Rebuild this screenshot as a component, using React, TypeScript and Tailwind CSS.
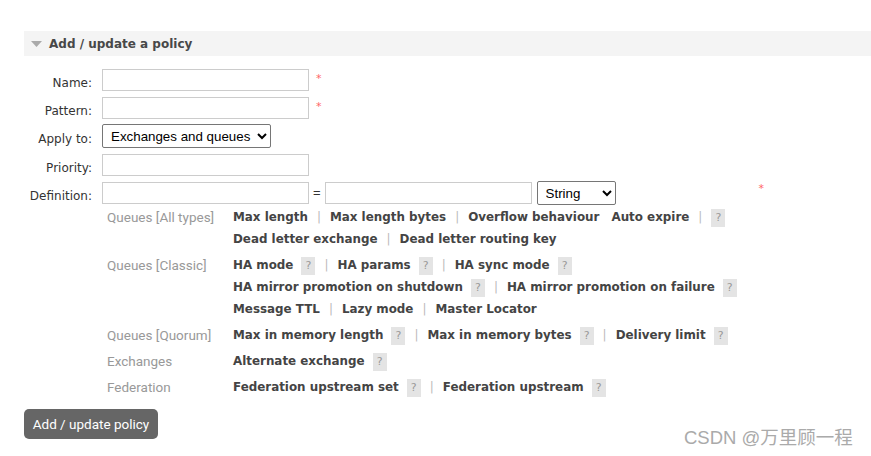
import React from 'react';

const verdana = { fontFamily: '"DejaVu Sans", Verdana, sans-serif' };
const arial = { fontFamily: '"Liberation Sans", Arial, sans-serif' };

type Item = { text: string; help?: boolean; sep?: boolean };

const groups: { label: string; lines: Item[][] }[] = [
  {
    label: 'Queues [All types]',
    lines: [
      [
        { text: 'Max length', sep: true },
        { text: 'Max length bytes', sep: true },
        { text: 'Overflow behaviour' },
        { text: 'Auto expire', sep: true },
      ],
      [{ text: 'Dead letter exchange', sep: true }, { text: 'Dead letter routing key' }],
    ],
  },
  {
    label: 'Queues [Classic]',
    lines: [
      [
        { text: 'HA mode', help: true, sep: true },
        { text: 'HA params', help: true, sep: true },
        { text: 'HA sync mode', help: true },
      ],
      [
        { text: 'HA mirror promotion on shutdown', help: true, sep: true },
        { text: 'HA mirror promotion on failure', help: true },
      ],
      [
        { text: 'Message TTL', sep: true },
        { text: 'Lazy mode', sep: true },
        { text: 'Master Locator' },
      ],
    ],
  },
  {
    label: 'Queues [Quorum]',
    lines: [
      [
        { text: 'Max in memory length', help: true, sep: true },
        { text: 'Max in memory bytes', help: true, sep: true },
        { text: 'Delivery limit', help: true },
      ],
    ],
  },
  { label: 'Exchanges', lines: [[{ text: 'Alternate exchange', help: true }]] },
  {
    label: 'Federation',
    lines: [
      [
        { text: 'Federation upstream set', help: true, sep: true },
        { text: 'Federation upstream', help: true },
      ],
    ],
  },
];

const Help = ({ tight }: { tight?: boolean }) => (
  <span
    className={`${tight ? '' : 'ml-[8px]'} inline-flex h-[18px] w-[14px] items-center justify-center bg-[#e4e4e4] text-[11px] font-normal text-[#999]`}
  >
    ?
  </span>
);

const Sep = () => <span className="mx-[9px] font-normal text-[#bbb]">|</span>;

const Req = () => <span className="ml-[7px] self-start pt-[2px] text-[11px] text-[#f66]">*</span>;

const TextInput = () => (
  <input type="text" className="h-[22px] w-[207px] border border-[#ccc] bg-white outline-none" />
);

const FormRow = ({ label, children, className }: { label: string; children: React.ReactNode; className?: string }) => (
  <div className={`flex items-center ${className ?? ''}`}>
    <label className="h-[22px] w-[68px] text-right text-[12px] leading-[28px] text-[#333]" style={verdana}>
      {label}
    </label>
    <div className="ml-[10px] flex items-center">{children}</div>
  </div>
);

export default function App() {
  return (
    <div className="relative h-[456px] w-[871px] overflow-hidden bg-white" style={verdana}>
      <div className="pl-[24px] pt-[31px]">
        <div className="flex h-[25px] items-center bg-[#f4f4f4] pl-[7px]">
          <svg width="11" height="7" viewBox="0 0 11 7" className="mt-[1px]">
            <polygon points="0,0 11,0 5.5,6" fill="#aaa" />
          </svg>
          <span className="ml-[7px] text-[12px] font-bold text-[#484848]">Add / update a policy</span>
        </div>

        <div className="mt-[13px] flex flex-col">
          <FormRow label="Name:">
            <TextInput />
            <Req />
          </FormRow>
          <FormRow label="Pattern:" className="mt-[6px]">
            <TextInput />
            <Req />
          </FormRow>
          <FormRow label="Apply to:" className="mt-[5px]">
            <select
              className="h-[24px] w-[169px] rounded-[2px] border border-[#767676] bg-white pl-[4px] text-[13.33px] text-black"
              style={arial}
              defaultValue="all"
            >
              <option value="all">Exchanges and queues</option>
            </select>
          </FormRow>
          <FormRow label="Priority:" className="mt-[6px]">
            <TextInput />
          </FormRow>
          <FormRow label="Definition:" className="mt-[5px]">
            <TextInput />
            <span className="mx-[4px] text-[13px] text-[#333]" style={arial}>
              =
            </span>
            <TextInput />
            <select
              className="ml-[5px] h-[24px] w-[79px] rounded-[2px] border border-[#767676] bg-white pl-[4px] text-[13.33px] text-black"
              style={arial}
              defaultValue="string"
            >
              <option value="string">String</option>
            </select>
            <span className="ml-[143px] self-start text-[11px] text-[#f66]">*</span>
          </FormRow>
        </div>

        <div className="ml-[83px] mt-[2px] flex flex-col">
          {groups.map((g, gi) => (
            <div key={g.label} className="flex pb-[4px]">
              <div
                className="w-[126px] text-[13.5px] leading-[20px] text-[#999]"
                style={{ fontFamily: 'Roboto, "Open Sans", sans-serif' }}
              >
                {g.label}
              </div>
              <div className="flex flex-col">
                {g.lines.map((line, i) => (
                  <div key={i} className="flex h-[22px] items-center text-[11.9px] font-bold text-[#444]">
                    {line.map((it, j) => (
                      <React.Fragment key={j}>
                        <span className={j > 0 && !line[j - 1].sep ? 'ml-[12px]' : ''}>{it.text}</span>
                        {it.help && <Help />}
                        {it.sep && <Sep />}
                        {gi === 0 && i === 0 && j === line.length - 1 && <Help tight />}
                      </React.Fragment>
                    ))}
                  </div>
                ))}
              </div>
            </div>
          ))}
        </div>

        <button
          className="mt-[6px] h-[30px] w-[134px] rounded-[5px] bg-[#666] text-[13.5px] text-white"
          style={{ fontFamily: 'Roboto, "Open Sans", sans-serif' }}
        >
          Add / update policy
        </button>
      </div>

      <div
        className="absolute left-[684px] top-[424px] text-[18.5px] text-[#aaa]"
        style={{ fontFamily: '"Liberation Sans", "Noto Sans CJK SC", sans-serif' }}
      >
        CSDN @万里顾一程
      </div>
    </div>
  );
}
